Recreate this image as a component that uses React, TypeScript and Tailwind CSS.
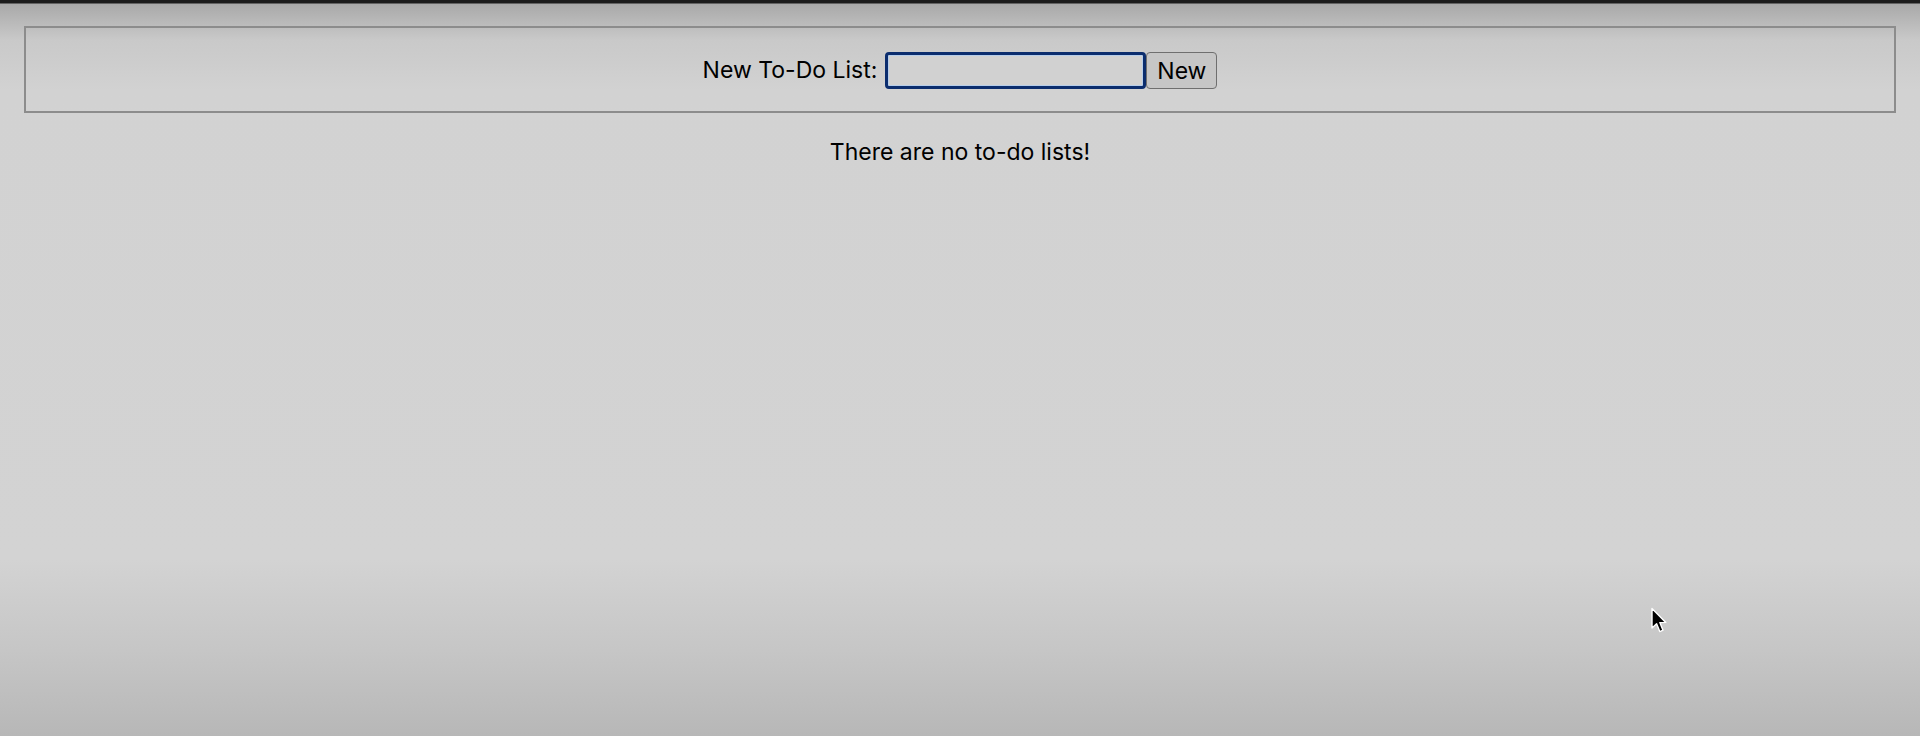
import React, { useState } from 'react';

function Cursor() {
  return (
    <svg width="18" height="28" viewBox="0 0 18 28" className="absolute left-[1650px] top-[607px]">
      <path
        d="M2 1.5 L2 21 L6.6 16.8 L9.8 24.6 L13 23.2 L9.8 15.6 L15.8 15.4 Z"
        fill="#000"
        stroke="#fff"
        strokeWidth="1.4"
        strokeLinejoin="round"
      />
    </svg>
  );
}

export default function App() {
  const [name, setName] = useState('');

  return (
    <div className="relative h-[736px] w-full overflow-hidden bg-[linear-gradient(to_bottom,#1c1c1c_0px,#1c1c1c_3px,#a9a9a9_4px,#c9c9c9_40px,#d2d2d2_90px,#d3d3d3_560px,#c6c6c6_650px,#b7b7b7_736px)] px-[24px] pt-[26px] font-['Inter','Noto_Sans',sans-serif] text-black">
      <div className="flex h-[87px] items-center justify-center border-2 border-[#8c8c8c]">
        <label className="mr-[8px] pt-[2px] text-[23px] leading-none">New To-Do List:</label>
        <input
          value={name}
          onChange={(e) => setName(e.target.value)}
          className="mt-[1px] h-[37px] w-[261px] rounded-[4px] border-[3px] border-[#0b2d6e] bg-[#d1d1d1] shadow-[inset_0_0_0_1px_#b6cdea] outline-none"
        />
        <button className="mt-[1px] h-[37px] w-[71px] rounded-[4px] border-[1.5px] border-[#6f6f6f] bg-[#c6c6c6] pt-[2px] text-[23px] leading-none">
          New
        </button>
      </div>
      <p className="mt-[26px] text-center text-[23px] leading-[27px]">There are no to-do lists!</p>
      <Cursor />
    </div>
  );
}
